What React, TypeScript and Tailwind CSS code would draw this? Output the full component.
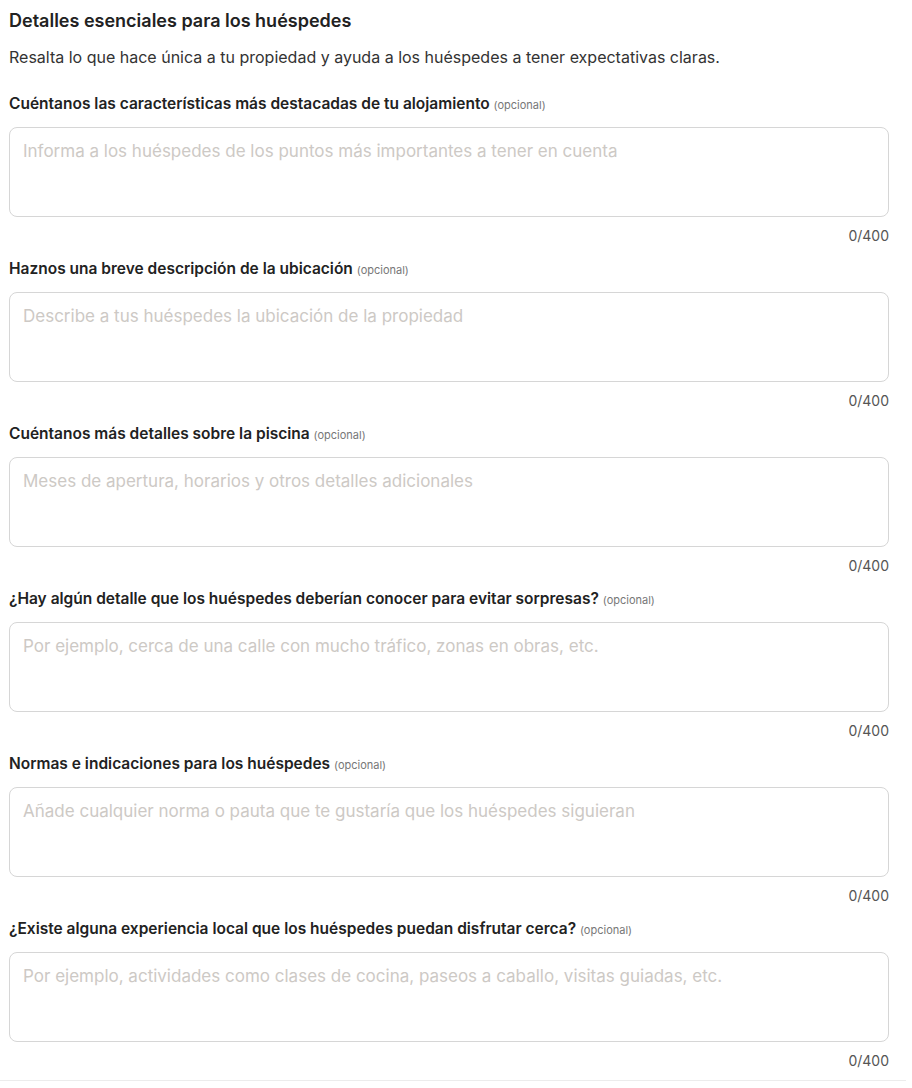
const fields = [
  {
    label: "Cuéntanos las características más destacadas de tu alojamiento",
    placeholder: "Informa a los huéspedes de los puntos más importantes a tener en cuenta",
  },
  {
    label: "Haznos una breve descripción de la ubicación",
    placeholder: "Describe a tus huéspedes la ubicación de la propiedad",
  },
  {
    label: "Cuéntanos más detalles sobre la piscina",
    placeholder: "Meses de apertura, horarios y otros detalles adicionales",
  },
  {
    label: "¿Hay algún detalle que los huéspedes deberían conocer para evitar sorpresas?",
    placeholder: "Por ejemplo, cerca de una calle con mucho tráfico, zonas en obras, etc.",
  },
  {
    label: "Normas e indicaciones para los huéspedes",
    placeholder: "Añade cualquier norma o pauta que te gustaría que los huéspedes siguieran",
  },
  {
    label: "¿Existe alguna experiencia local que los huéspedes puedan disfrutar cerca?",
    placeholder: "Por ejemplo, actividades como clases de cocina, paseos a caballo, visitas guiadas, etc.",
  },
];

function Field({ label, placeholder }: { label: string; placeholder: string }) {
  return (
    <div className="mb-[15px] flex flex-col">
      <label className="text-[15.5px] leading-5 font-semibold text-[#222]">
        {label} <span className="text-[11px] font-normal text-[#777]">(opcional)</span>
      </label>
      <textarea
        placeholder={placeholder}
        className="mt-3 h-[90px] w-full resize-none rounded-lg border border-[#d6d6d6] bg-white px-[13px] py-[11px] text-[17px] leading-6 text-[#222] outline-none placeholder:text-[#cdc9c5]"
      />
      <div className="mt-[11px] text-right text-sm leading-4 text-[#555]">0/400</div>
    </div>
  );
}

export default function App() {
  return (
    <div className="min-h-screen bg-white font-['Inter','Liberation_Sans',sans-serif]">
      <div className="pl-[9px] pr-[23px] pt-[9px]">
        <h2 className="text-lg leading-6 font-semibold text-[#222]">
          Detalles esenciales para los huéspedes
        </h2>
        <p className="mt-[14px] text-base leading-5 text-[#333]">
          Resalta lo que hace única a tu propiedad y ayuda a los huéspedes a tener expectativas claras.
        </p>
        <div className="mt-[27px]">
          {fields.map((f) => (
            <Field key={f.label} label={f.label} placeholder={f.placeholder} />
          ))}
        </div>
      </div>
      <div className="mt-[-4px] h-px w-[906px] bg-[#ececec]" />
    </div>
  );
}
